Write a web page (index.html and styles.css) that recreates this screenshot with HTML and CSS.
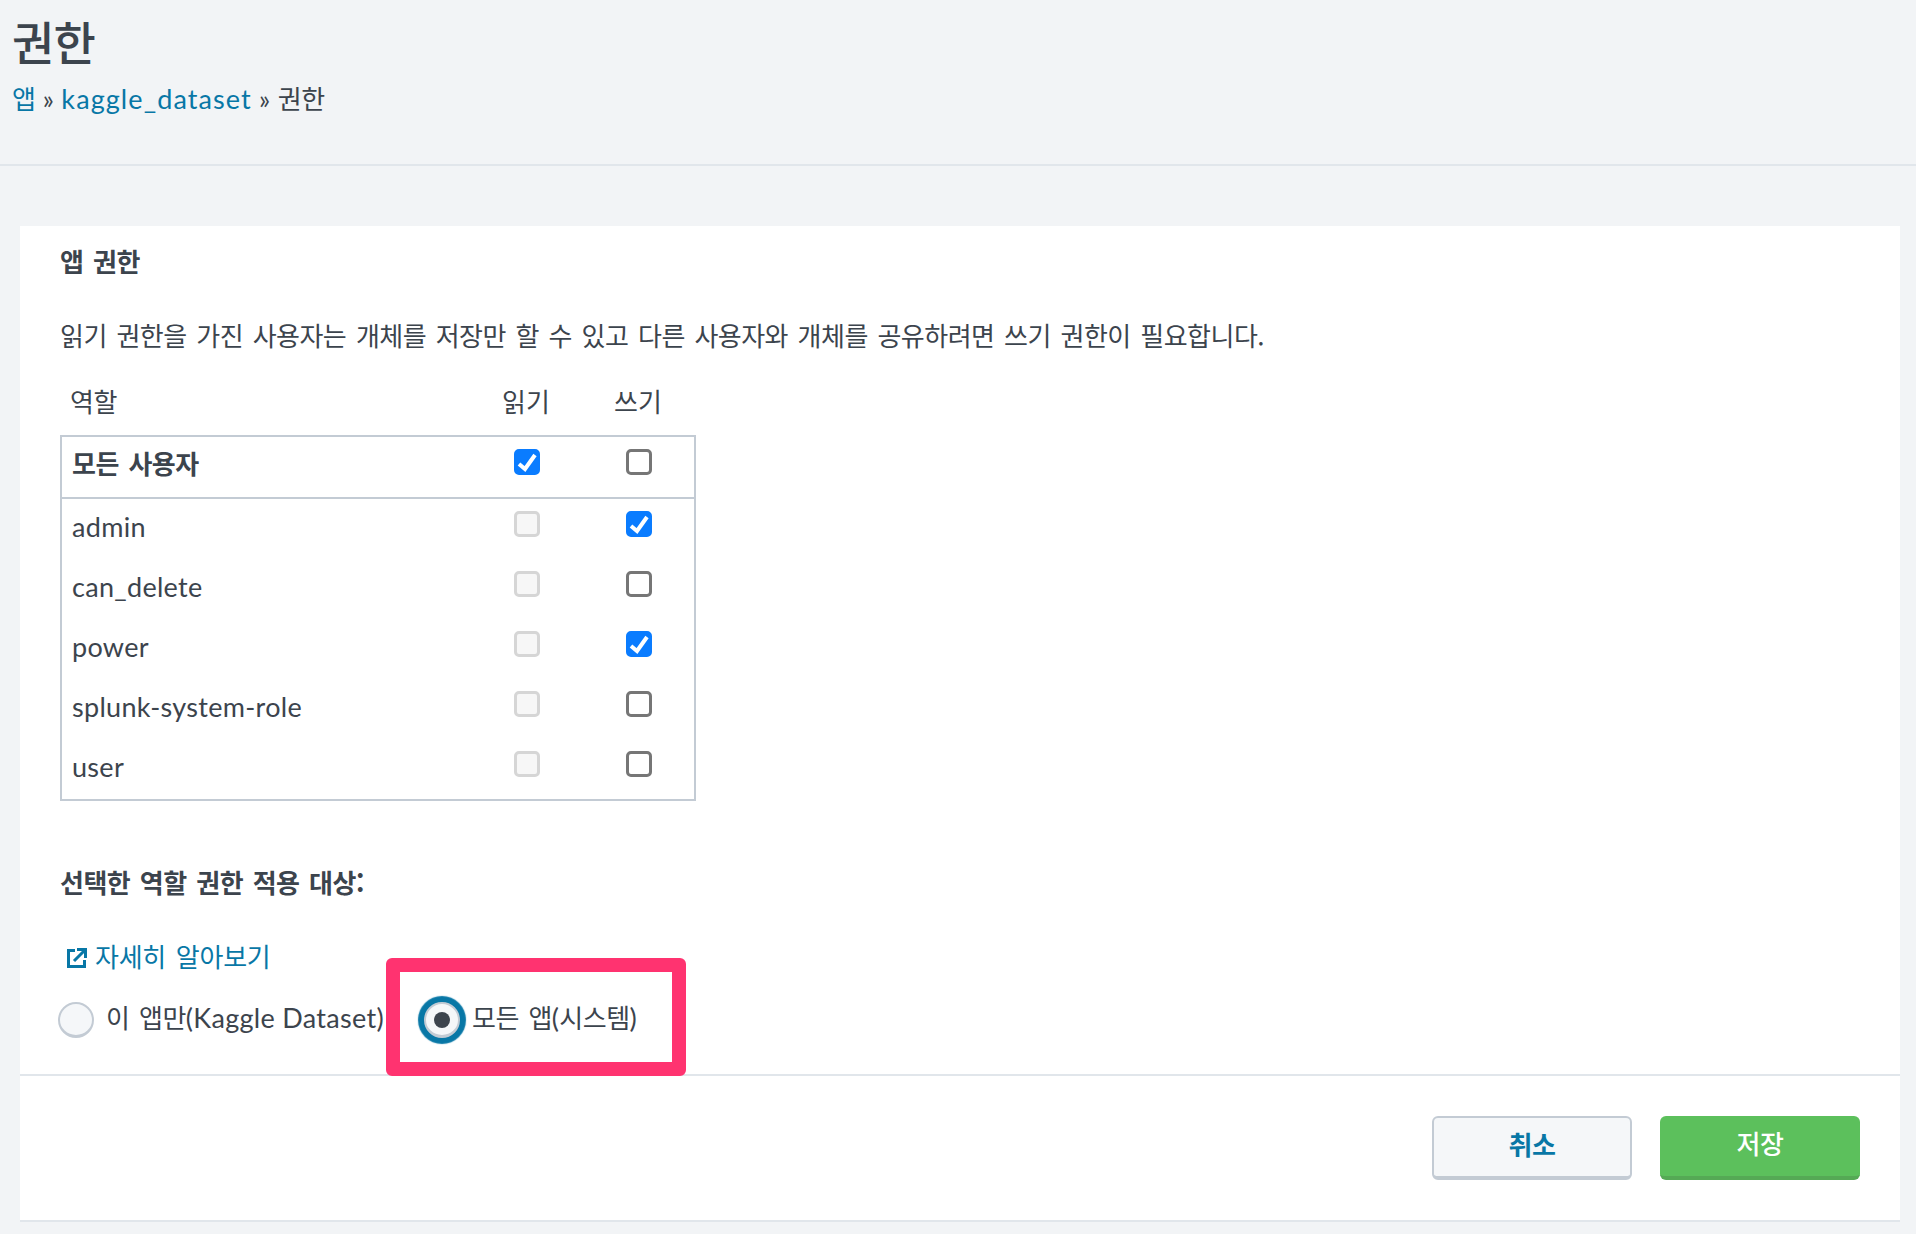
FILE: index.html
```html
<!DOCTYPE html>
<html lang="ko">
<head>
    <meta charset="UTF-8">
    <meta name="viewport" content="width=device-width, initial-scale=1.0">
    <title>권한</title>
    <link rel="stylesheet" href="styles.css">
</head>
<body>

    <div class="page-header">
        <h1><span class="ko">권한</span></h1>
        <div class="breadcrumb">
            <a href="#" class="ko">앱</a> <span class="sep">»</span> <a href="#" class="app-link">kaggle_dataset</a> <span class="sep">»</span> <span class="ko">권한</span>
        </div>
    </div>

    <div class="card">
        <div class="card-body">
            <h2 class="section-title"><span class="ko">앱 권한</span></h2>
            <p class="intro ko">읽기 권한을 가진 사용자는 개체를 저장만 할 수 있고 다른 사용자와 개체를 공유하려면 쓰기 권한이 필요합니다.</p>

            <div class="table-head">
                <span class="col-name ko">역할</span>
                <span class="col-head ko">읽기</span>
                <span class="col-head ko">쓰기</span>
            </div>

            <div class="perm-table">
                <div class="perm-row perm-all">
                    <span class="col-name ko">모든 사용자</span>
                    <span class="cb checked"><svg viewBox="0 0 26 26"><path d="M5 15l6 5 10-14"/></svg></span>
                    <span class="cb"></span>
                </div>
                <div class="perm-row">
                    <span class="col-name">admin</span>
                    <span class="cb disabled"></span>
                    <span class="cb checked"><svg viewBox="0 0 26 26"><path d="M5 15l6 5 10-14"/></svg></span>
                </div>
                <div class="perm-row">
                    <span class="col-name">can_delete</span>
                    <span class="cb disabled"></span>
                    <span class="cb"></span>
                </div>
                <div class="perm-row">
                    <span class="col-name">power</span>
                    <span class="cb disabled"></span>
                    <span class="cb checked"><svg viewBox="0 0 26 26"><path d="M5 15l6 5 10-14"/></svg></span>
                </div>
                <div class="perm-row">
                    <span class="col-name">splunk-system-role</span>
                    <span class="cb disabled"></span>
                    <span class="cb"></span>
                </div>
                <div class="perm-row">
                    <span class="col-name">user</span>
                    <span class="cb disabled"></span>
                    <span class="cb"></span>
                </div>
            </div>

            <h2 class="section-title apply-title"><span class="ko">선택한 역할 권한 적용 대상:</span></h2>

            <a href="#" class="learn-more">
                <svg class="ext-icon" viewBox="0 0 20 20"><path d="M8 2.5H1.5v16h16V12"/><path d="M7 13L17 3M10 1.5h8.500V10"/></svg>
                <span class="ko">자세히 알아보기</span>
            </a>

            <div class="radio-row">
                <span class="radio"></span>
                <span class="radio-label first"><span class="ko">이 앱만</span>(Kaggle Dataset)</span>
                <span class="radio selected"><span class="dot"></span></span>
                <span class="radio-label"><span class="ko">모든 앱</span>(<span class="ko">시스템</span>)</span>
            </div>
        </div>

        <div class="card-footer">
            <button class="btn btn-cancel"><span class="ko">취소</span></button>
            <button class="btn btn-save"><span class="ko">저장</span></button>
        </div>

        <div class="highlight"></div>
    </div>

</body>
</html>
```

FILE: styles.css
```css
* {
    box-sizing: border-box;
}
body {
    margin: 0;
    height: 1234px;
    overflow: hidden;
    background-color: #f2f4f6;
    color: #3c444d;
    font-family: Lato, "Noto Sans CJK KR", sans-serif;
    font-size: 27px;
    letter-spacing: 0.3px;
    line-height: 36px;
}
a {
    color: #0877a6;
    text-decoration: none;
}
.ko {
    font-family: "Noto Sans CJK KR", sans-serif;
    font-size: 26px;
    letter-spacing: -0.02em;
    word-spacing: 0.11em;
}
.page-header {
    height: 166px;
    padding: 13px 12px 0;
    border-bottom: 2px solid #e1e6eb;
}
h1 {
    margin: 0;
    font-size: 46px;
    font-weight: 500;
    line-height: 54px;
}
h1 .ko {
    font-size: 46px;
}
.breadcrumb {
    margin-top: 10px;
    white-space: nowrap;
}
.app-link {
    letter-spacing: 1.1px;
}
.sep {
    font-size: 26px;
}
.card {
    position: relative;
    margin: 60px 16px 0 20px;
    height: 994px;
    background: white;
    box-shadow: 0 2px 0 #e1e6eb;
}
.card-body {
    height: 850px;
    padding: 17px 40px 0;
    border-bottom: 2px solid #e1e6eb;
}
.section-title {
    margin: 0;
    font-size: 26px;
    font-weight: 700;
    line-height: 36px;
}
.intro {
    margin: 37px 0 0;
    white-space: nowrap;
}
.table-head {
    display: flex;
    margin-top: 30px;
    padding: 0 34px 0 10px;
    width: 636px;
}
.col-name {
    flex: 1;
}
.col-head {
    width: 48px;
    margin-left: 64px;
    letter-spacing: 0;
}
.perm-table {
    width: 636px;
    margin-top: 16px;
    border: 2px solid #c3cbd4;
}
.perm-row {
    display: flex;
    height: 60px;
    padding: 12px 42px 0 10px;
}
.perm-row .col-name {
    line-height: 32px;
}
.perm-all {
    height: 62px;
    border-bottom: 2px solid #c3cbd4;
}
.perm-all .col-name {
    font-weight: 700;
    line-height: 28px;
}
.cb {
    width: 26px;
    height: 26px;
    margin-left: 86px;
    border: 3px solid #767676;
    border-radius: 5px;
    background: white;
}
.cb svg {
    display: block;
    width: 26px;
    height: 26px;
    margin: -3px;
    fill: none;
    stroke: white;
    stroke-width: 4;
}
.cb.checked {
    background: #0a7cff;
    border-color: #0a7cff;
}
.cb.disabled {
    background: #f7f7f7;
    border-color: #d6d6d6;
}
.apply-title {
    margin-top: 63px;
}
.learn-more {
    display: flex;
    align-items: center;
    margin: 37px 0 0 7px;
}
.learn-more .ko {
    letter-spacing: -0.01em;
}
.ext-icon {
    width: 20px;
    height: 20px;
    margin: 3px 8px 0 0;
    fill: none;
    stroke: #0877a6;
    stroke-width: 3;
}
.radio-row {
    display: flex;
    margin: 28px 0 0 -2px;
}
.radio {
    flex: none;
    display: flex;
    align-items: center;
    justify-content: center;
    width: 36px;
    height: 36px;
    border: 2px solid #c3cbd4;
    border-bottom-width: 3px;
    border-radius: 50%;
    background: #f5f7f9;
}
.radio.selected {
    box-shadow: 0 0 1px 6px #0877a6;
}
.dot {
    width: 16px;
    height: 16px;
    border-radius: 50%;
    background: #3c444d;
}
.radio-label {
    margin: -3px 0 0 12px;
    white-space: nowrap;
}
.radio-label.first {
    width: 318px;
}
.card-footer {
    display: flex;
    justify-content: flex-end;
    gap: 28px;
    padding: 40px 40px 0 0;
}
.btn {
    width: 200px;
    height: 64px;
    padding: 0 0 8px;
    border-radius: 6px;
    font-family: inherit;
    font-size: 26px;
    cursor: pointer;
}
.btn-cancel {
    border: 2px solid #c3cbd4;
    border-bottom-width: 4px;
    background: #f5f7f9;
    color: #0877a6;
    font-weight: 700;
}
.btn-save {
    border: none;
    border-bottom: 4px solid #55a955;
    background: #5cc05c;
    color: white;
    font-weight: 500;
}
.highlight {
    position: absolute;
    left: 366px;
    top: 732px;
    width: 300px;
    height: 118px;
    border: 14px solid #ff3370;
    border-radius: 6px;
}
```
